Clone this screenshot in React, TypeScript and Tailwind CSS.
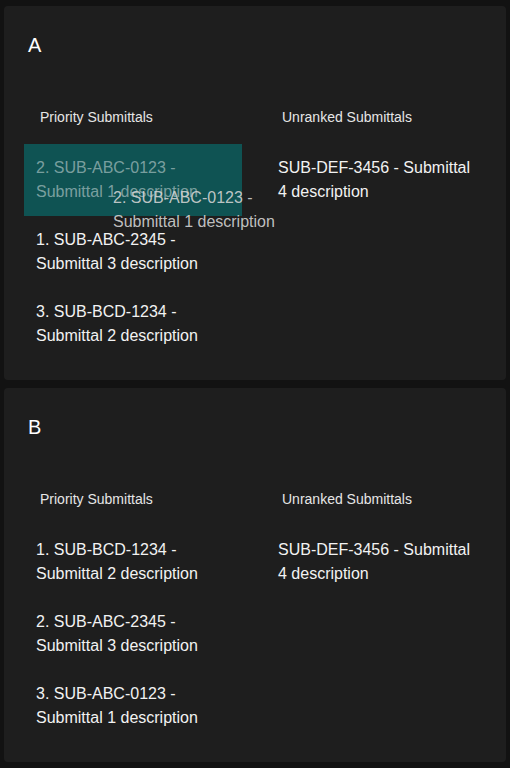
type Item = { label: string; placeholder?: boolean };

type Board = {
  title: string;
  priority: Item[];
  unranked: Item[];
  dragging?: string;
};

const BOARDS: Board[] = [
  {
    title: "A",
    priority: [
      { label: "2. SUB-ABC-0123 - Submittal 1 description", placeholder: true },
      { label: "1. SUB-ABC-2345 - Submittal 3 description" },
      { label: "3. SUB-BCD-1234 - Submittal 2 description" },
    ],
    unranked: [{ label: "SUB-DEF-3456 - Submittal 4 description" }],
    dragging: "2. SUB-ABC-0123 - Submittal 1 description",
  },
  {
    title: "B",
    priority: [
      { label: "1. SUB-BCD-1234 - Submittal 2 description" },
      { label: "2. SUB-ABC-2345 - Submittal 3 description" },
      { label: "3. SUB-ABC-0123 - Submittal 1 description" },
    ],
    unranked: [{ label: "SUB-DEF-3456 - Submittal 4 description" }],
  },
];

function Column({ title, items, dragging }: { title: string; items: Item[]; dragging?: string }) {
  return (
    <div className="w-[218px]">
      <div className="pl-4 text-sm leading-5 text-[#e6e6e6] mb-[17px]">{title}</div>
      <div className="relative">
        {items.map((it) => (
          <div
            key={it.label}
            className={`px-3 py-3 text-base leading-6 ${
              it.placeholder ? "bg-[#0f5353] text-white/45" : "text-[#f2f2f2]"
            }`}
          >
            {it.label}
          </div>
        ))}
        {dragging ? (
          <div className="absolute left-[77px] top-[30px] w-[218px] px-3 py-3 text-base leading-6 text-[#d4d4d4]/90 pointer-events-none">
            {dragging}
          </div>
        ) : null}
      </div>
    </div>
  );
}

export default function App() {
  return (
    <div
      className="min-h-[768px] bg-[#121212] px-1 pt-[6px] pb-[6px] flex flex-col gap-2"
      style={{ fontFamily: '"Liberation Sans", Arial, sans-serif' }}
    >
      {BOARDS.map((b) => (
        <div key={b.title} className="rounded bg-[#1e1e1e] px-5 pt-[25px] pb-5">
          <div className="pl-1 text-xl leading-7 text-white">{b.title}</div>
          <div className="mt-[48px] flex gap-6">
            <Column title="Priority Submittals" items={b.priority} dragging={b.dragging} />
            <Column title="Unranked Submittals" items={b.unranked} />
          </div>
        </div>
      ))}
    </div>
  );
}
